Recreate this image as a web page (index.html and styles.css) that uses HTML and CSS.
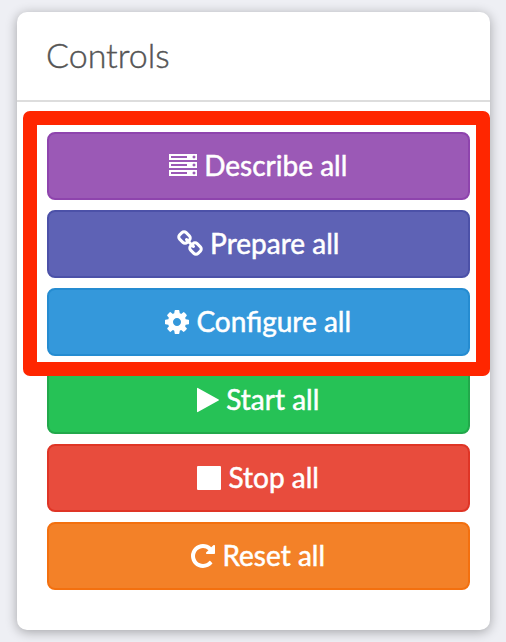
FILE: index.html
```html
<!DOCTYPE html>
<html lang="en">
<head>
<meta charset="utf-8">
<title>Controls</title>
<link rel="stylesheet" href="styles.css">
</head>
<body>
<section class="card">
  <h2 class="card-header">Controls</h2>
  <div class="card-body">
    <button class="btn describe"><svg width="28" height="28" viewBox="0 0 1792 1792"><path d="M128 1408h1024v-128h-1024v128zm0-512h1024v-128h-1024v128zm1568 448q0-40-28-68t-68-28-68 28-28 68 28 68 68 28 68-28 28-68zm-1568-960h1024v-128h-1024v128zm1568 448q0-40-28-68t-68-28-68 28-28 68 28 68 68 28 68-28 28-68zm0-512q0-40-28-68t-68-28-68 28-28 68 28 68 68 28 68-28 28-68zm96 832v384h-1792v-384h1792zm0-512v384h-1792v-384h1792zm0-512v384h-1792v-384h1792z"/></svg><span>Describe all</span></button>
    <button class="btn prepare"><svg width="26" height="28" viewBox="64 0 1664 1792"><path d="M1520 1216q0-40-28-68l-208-208q-28-28-68-28-42 0-72 32 3 3 19 18.500t21.500 21.500 15 19 13 25.500 3.500 27.500q0 40-28 68t-68 28q-15 0-27.500-3.500t-25.500-13-19-15-21.500-21.500-18.500-19q-33 31-33 73 0 40 28 68l206 207q27 27 68 27 40 0 68-26l147-146q28-28 28-67zm-703-705q0-40-28-68l-206-207q-28-28-68-28-39 0-68 27l-147 146q-28 28-28 67 0 40 28 68l208 208q27 27 68 27 42 0 72-31-3-3-19-18.500t-21.500-21.500-15-19-13-25.500-3.500-27.500q0-40 28-68t68-28q15 0 27.500 3.500t25.500 13 19 15 21.500 21.500 18.500 19q33-31 33-73zm895 705q0 120-85 203l-147 146q-83 83-203 83-121 0-204-85l-206-207q-83-83-83-203 0-123 88-209l-88-88q-86 88-208 88-120 0-204-84l-208-208q-84-84-84-204t85-203l147-146q83-83 203-83 121 0 204 85l206 207q83 83 83 203 0 123-88 209l88 88q86-88 208-88 120 0 204 84l208 208q84 84 84 204z"/></svg><span>Prepare all</span></button>
    <button class="btn configure"><svg width="24" height="28" viewBox="128 0 1536 1792"><path d="M1152 896q0-106-75-181t-181-75-181 75-75 181 75 181 181 75 181-75 75-181zm512-109v222q0 12-8 23t-20 13l-185 28q-19 54-39 91 35 50 107 138 10 12 10 25t-9 23q-27 37-99 108t-94 71q-12 0-26-9l-138-108q-44 23-91 38-16 136-29 186-7 28-36 28h-222q-14 0-24.500-8.500t-11.500-21.500l-28-184q-49-16-90-37l-141 107q-10 9-25 9-14 0-25-11-126-114-165-168-7-10-7-23 0-12 8-23 15-21 51-66.500t54-70.500q-27-50-41-99l-183-27q-13-2-21-12.500t-8-23.500v-222q0-12 8-23t19-13l186-28q14-46 39-92-40-57-107-138-10-12-10-24 0-10 9-23 26-36 98.500-107.500t94.500-71.500q13 0 26 10l138 107q44-23 91-38 16-136 29-186 7-28 36-28h222q14 0 24.500 8.500t11.500 21.500l28 184q49 16 90 37l142-107q9-9 24-9 13 0 25 10 129 119 165 170 7 8 7 22 0 12-8 23-15 21-51 66.500t-54 70.500q26 50 41 98l183 28q13 2 21 12.500t8 23.500z"/></svg><span>Configure all</span></button>
    <button class="btn start"><svg width="22" height="28" viewBox="192 0 1408 1792"><path d="M1576 927l-1328 738q-23 13-39.500 3t-16.500-36v-1472q0-26 16.500-36t39.500 3l1328 738q23 13 23 31t-23 31z"/></svg><span>Start all</span></button>
    <button class="btn stop"><svg width="24" height="28" viewBox="0 0 24 28"><rect y="2" width="24" height="24" rx="1"/></svg><span>Stop all</span></button>
    <button class="btn reset"><svg width="24" height="28" viewBox="128 0 1536 1792"><path d="M1664 256v448q0 26-19 45t-45 19h-448q-42 0-59-40-17-39 14-69l138-138q-148-137-349-137-104 0-198.500 40.500t-163.500 109.500-109.500 163.500-40.500 198.500 40.500 198.500 109.500 163.500 163.500 109.500 198.500 40.500q119 0 225-52t179-147q7-10 23-12 15 0 25 9l137 138q9 8 9.500 20.500t-7.500 22.500q-109 132-264 204.500t-327 72.500q-156 0-298-61t-245-164-164-245-61-298 61-298 164-245 245-164 298-61q147 0 284.500 55.500t244.500 156.500l130-129q29-31 70-14 39 17 39 59z"/></svg><span>Reset all</span></button>
    <div class="highlight"></div>
  </div>
</section>
</body>
</html>
```
FILE: styles.css
```css
* { box-sizing: border-box; }
body {
  margin: 0;
  padding: 12px 16px 12px 17px;
  height: 642px;
  overflow: hidden;
  background: #eeeff4;
  font-family: Lato, sans-serif;
}
.card {
  height: 618px;
  background: #fff;
  border-radius: 10px;
  box-shadow: 0 2px 12px rgba(0, 0, 0, .32);
}
.card-header {
  margin: 0;
  height: 90px;
  padding: 0 29px;
  border-bottom: 2px solid #ddd;
  font-size: 34px;
  font-weight: 300;
  line-height: 85px;
  color: #555;
  -webkit-text-stroke: .4px #555;
}
.card-body {
  position: relative;
  display: flex;
  flex-direction: column;
  gap: 10px;
  padding: 30px 20px 0 30px;
}
.btn {
  display: flex;
  align-items: center;
  justify-content: center;
  gap: 7.500px;
  height: 68px;
  padding: 0 1px 0 0;
  border: 2px solid;
  border-radius: 8px;
  color: #fff;
  font: 400 28px/34px Lato, sans-serif;
}
.btn svg {
  flex: none;
  fill: currentColor;
  fill-rule: evenodd;
}
.btn span {
  padding-bottom: 2px;
  -webkit-text-stroke: .5px #fff;
}
.describe { background: #9b59b6; border-color: #8e44ad; }
.prepare { background: #5e62b5; border-color: #4c51a8; }
.configure { background: #3498db; border-color: #258cd1; }
.start { background: #26c256; border-color: #22a84b; }
.stop { background: #e84c3d; border-color: #df3526; }
.reset { background: #f38128; border-color: #f3700f; }
.highlight {
  position: absolute;
  left: 5.700px;
  top: 9px;
  width: 467.600px;
  height: 265px;
  border: 14px solid #ff2600;
  border-radius: 7px;
  pointer-events: none;
}
```
